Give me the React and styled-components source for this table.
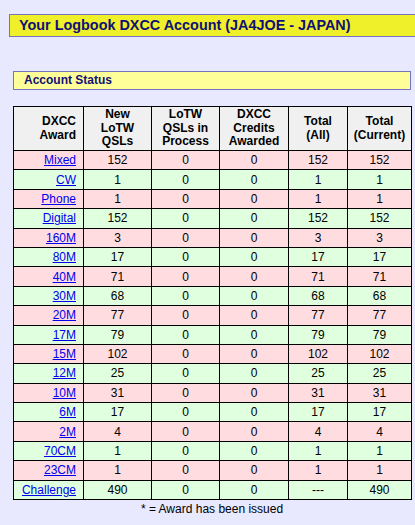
import React from "react";
import styled, { createGlobalStyle } from "styled-components";

const Global = createGlobalStyle`
  html, body { margin: 0; padding: 0; background: #E8E8FF; overflow: hidden; }
  body { font-family: "Liberation Sans", Arial, sans-serif; }
`;

const Page = styled.div`
  padding: 14px 0 0 9px;
  width: 415px;
  box-sizing: border-box;
`;

const TitleBar = styled.div`
  width: 406px;
  height: 23px;
  box-sizing: border-box;
  background: #EFEF2A;
  border: 1px solid #7474C0;
  border-right: none;
  color: #101078;
  font-weight: bold;
  font-size: 14.4px;
  line-height: 21px;
  padding-left: 9px;
  white-space: nowrap;
  overflow: hidden;
`;

const Section = styled.div`
  margin-left: 4px;
  width: 398px;
`;

const StatusBar = styled.div`
  margin-top: 34px;
  height: 19px;
  box-sizing: border-box;
  background: #FFFF99;
  border: 1px solid #7474C0;
  color: #101078;
  font-weight: bold;
  font-size: 12px;
  line-height: 17px;
  padding-left: 10px;
`;

const Table = styled.table`
  margin-top: 16px;
  width: 398px;
  border-collapse: collapse;
  table-layout: fixed;
  font-size: 12px;
  color: #000;
`;

const HeadCell = styled.th`
  background: #F0F0F0;
  border: 1px solid #000;
  font-weight: bold;
  line-height: 13.6px;
  height: 44px;
  padding: 1px 2px;
  box-sizing: border-box;
  text-align: ${(p) => (p.$first ? "right" : "center")};
  padding-right: ${(p) => (p.$first ? "7px" : "2px")};
  vertical-align: middle;
`;

const Row = styled.tr`
  background: ${(p) => (p.$even ? "#DFFFDF" : "#FFDCE0")};
`;

const Cell = styled.td`
  border: 1px solid #000;
  height: 19.4px;
  box-sizing: border-box;
  padding: 0 2px;
  line-height: 14px;
  text-align: ${(p) => (p.$first ? "right" : "center")};
  padding-right: ${(p) => (p.$first ? "7px" : "2px")};
`;

const AwardLink = styled.a`
  color: #0000EE;
  text-decoration: underline;
`;

const Footer = styled.div`
  text-align: center;
  font-size: 12px;
  line-height: 14px;
  margin-top: 2px;
  color: #000;
`;

const cols = [70, 68, 68, 69, 59, 64];

const rows = [
  ["Mixed", 152, 0, 0, 152, 152],
  ["CW", 1, 0, 0, 1, 1],
  ["Phone", 1, 0, 0, 1, 1],
  ["Digital", 152, 0, 0, 152, 152],
  ["160M", 3, 0, 0, 3, 3],
  ["80M", 17, 0, 0, 17, 17],
  ["40M", 71, 0, 0, 71, 71],
  ["30M", 68, 0, 0, 68, 68],
  ["20M", 77, 0, 0, 77, 77],
  ["17M", 79, 0, 0, 79, 79],
  ["15M", 102, 0, 0, 102, 102],
  ["12M", 25, 0, 0, 25, 25],
  ["10M", 31, 0, 0, 31, 31],
  ["6M", 17, 0, 0, 17, 17],
  ["2M", 4, 0, 0, 4, 4],
  ["70CM", 1, 0, 0, 1, 1],
  ["23CM", 1, 0, 0, 1, 1],
  ["Challenge", 490, 0, 0, "---", 490],
];

const headers = [
  ["DXCC", "Award"],
  ["New", "LoTW", "QSLs"],
  ["LoTW", "QSLs in", "Process"],
  ["DXCC", "Credits", "Awarded"],
  ["Total", "(All)"],
  ["Total", "(Current)"],
];

export default function App() {
  return (
    <>
      <Global />
      <Page>
        <TitleBar>Your Logbook DXCC Account (JA4JOE - JAPAN)</TitleBar>
        <Section>
          <StatusBar>Account Status</StatusBar>
          <Table>
            <colgroup>
              {cols.map((w, i) => (
                <col key={i} style={{ width: w }} />
              ))}
            </colgroup>
            <thead>
              <tr>
                {headers.map((lines, i) => (
                  <HeadCell key={i} $first={i === 0}>
                    {lines.map((l, j) => (
                      <React.Fragment key={j}>
                        {j > 0 && <br />}
                        {l}
                      </React.Fragment>
                    ))}
                  </HeadCell>
                ))}
              </tr>
            </thead>
            <tbody>
              {rows.map((r, i) => (
                <Row key={r[0]} $even={i % 2 === 1}>
                  <Cell $first>
                    <AwardLink href="#">{r[0]}</AwardLink>
                  </Cell>
                  {r.slice(1).map((v, j) => (
                    <Cell key={j}>{v}</Cell>
                  ))}
                </Row>
              ))}
            </tbody>
          </Table>
          <Footer>* = Award has been issued</Footer>
        </Section>
      </Page>
    </>
  );
}
